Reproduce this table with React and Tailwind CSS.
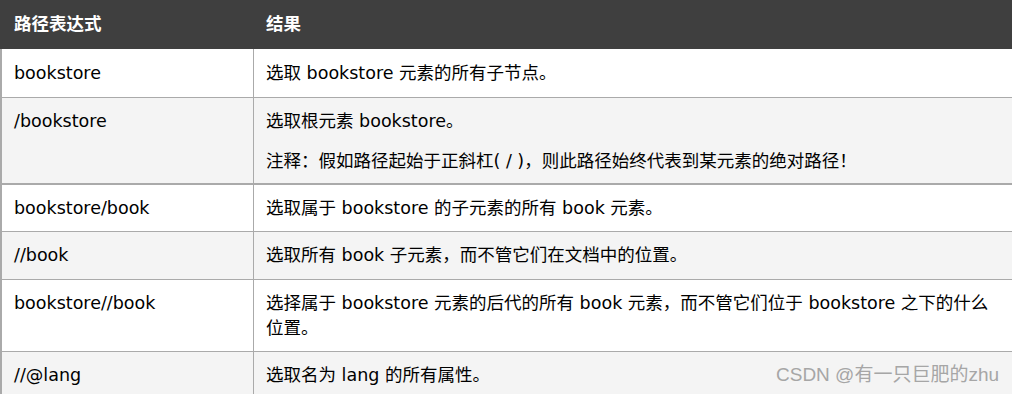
export default function App() {
  const cell1 = "w-[251px] shrink-0 px-[12px]";
  const cell2 = "flex-1 border-l border-[#aaaaaa] px-[12px] whitespace-nowrap";
  return (
    <div className="relative w-[1012px] h-[394px] overflow-hidden bg-white text-black text-[17.5px] leading-[25px] font-['DejaVu_Sans','Noto_Sans_CJK_SC',sans-serif]">
      <div className="flex h-[49px] items-center bg-[#3f3f3f] text-white font-bold">
        <div className="w-[253px] shrink-0 pl-[14px]">路径表达式</div>
        <div className="pl-[13px]">结果</div>
      </div>

      <div className="flex border-l-2 border-b border-[#aaaaaa] bg-white">
        <div className={`${cell1} pt-[12px] pb-[11px]`}>bookstore</div>
        <div className={`${cell2} pt-[12px] pb-[11px]`}>选取 bookstore 元素的所有子节点。</div>
      </div>

      <div className="flex border-l-2 border-b-2 border-[#aaaaaa] bg-[#f4f4f4]">
        <div className={`${cell1} pt-[11px] pb-[9px]`}>/bookstore</div>
        <div className={`${cell2} pt-[11px] pb-[9px]`}>
          <p className="mb-[15px]">选取根元素 bookstore。</p>
          <p>注释：假如路径起始于正斜杠( / )，则此路径始终代表到某元素的绝对路径！</p>
        </div>
      </div>

      <div className="flex border-l-2 border-b border-[#aaaaaa] bg-white">
        <div className={`${cell1} pt-[11px] pb-[10px]`}>bookstore/book</div>
        <div className={`${cell2} pt-[11px] pb-[10px]`}>选取属于 bookstore 的子元素的所有 book 元素。</div>
      </div>

      <div className="flex border-l-2 border-b border-[#aaaaaa] bg-[#f4f4f4]">
        <div className={`${cell1} pt-[11px] pb-[11px]`}>//book</div>
        <div className={`${cell2} pt-[11px] pb-[11px]`}>选取所有 book 子元素，而不管它们在文档中的位置。</div>
      </div>

      <div className="flex border-l-2 border-b border-[#aaaaaa] bg-white">
        <div className={`${cell1} pt-[11px] pb-[10px]`}>bookstore//book</div>
        <div className={`${cell2} pt-[11px] pb-[10px]`}>
          <div>选择属于 bookstore 元素的后代的所有 book 元素，而不管它们位于 bookstore 之下的什么</div>
          <div>位置。</div>
        </div>
      </div>

      <div className="flex border-l-2 border-b border-[#aaaaaa] bg-[#f4f4f4]">
        <div className={`${cell1} pt-[11px] pb-[11px]`}>//@lang</div>
        <div className={`${cell2} pt-[11px] pb-[11px]`}>选取名为 lang 的所有属性。</div>
      </div>

      <div className="absolute left-[776px] top-[362px] text-[19px] leading-[26px] text-[#a6a6a6] font-['Liberation_Sans','Noto_Sans_CJK_SC',sans-serif] whitespace-nowrap">
        CSDN @有一只巨肥的zhu
      </div>
    </div>
  );
}
